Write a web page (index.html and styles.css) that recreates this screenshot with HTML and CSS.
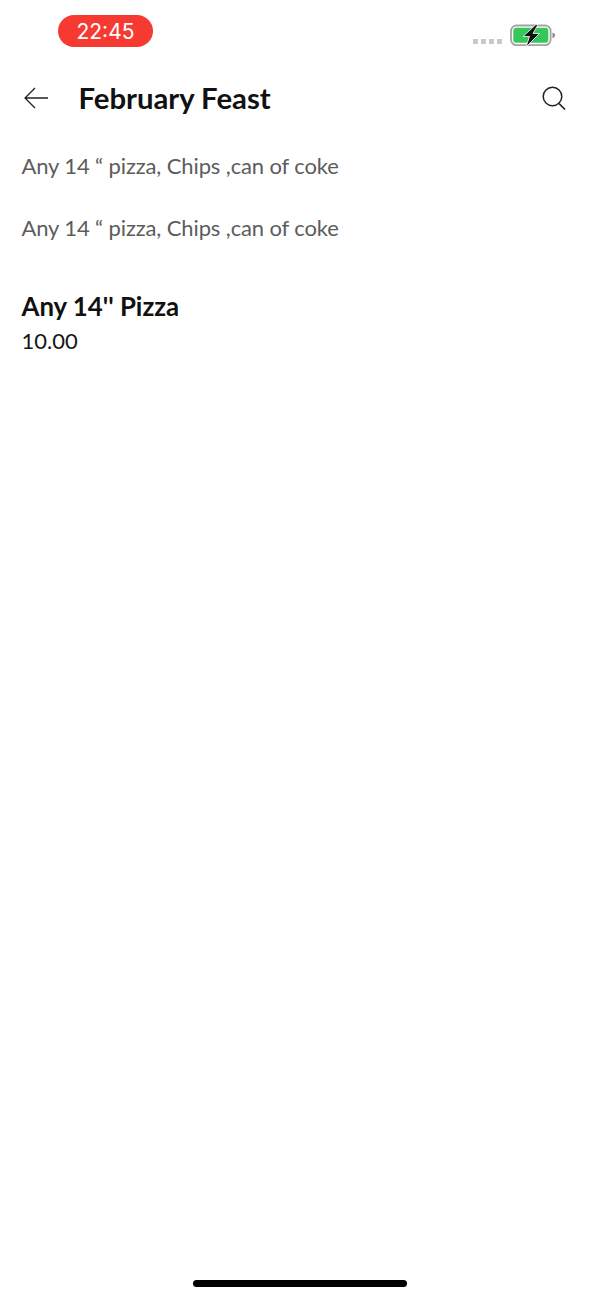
FILE: index.html
```html
<!DOCTYPE html>
<html lang="en">
<head>
<meta charset="utf-8">
<title>February Feast</title>
<link rel="stylesheet" href="styles.css">
</head>
<body>
<div class="screen">
  <div class="status">
    <span class="time">22:45</span>
    <div class="status-right">
      <div class="signal"><i></i><i></i><i></i><i></i></div>
      <svg class="battery" width="46" height="26" viewBox="0 0 46 26">
        <rect x="1" y="3.500" width="39.600" height="19.600" rx="5.500" fill="none" stroke="#a3a3a3" stroke-width="1.800"/>
        <rect x="3.300" y="5.800" width="35" height="15" rx="3" fill="#35c759"/>
        <path d="M42.500 10.500c1.800.4 2.500 1.500 2.500 2.800s-.7 2.400-2.500 2.800z" fill="#8a8a8a"/>
        <path d="M26 2.500 L13 14.500 H19.500 L16 25 L29.500 11.500 H23 L28 2.500Z" fill="#111" stroke="#fff" stroke-width=".8" stroke-linejoin="round"/>
      </svg>
    </div>
  </div>
  <header class="nav">
    <svg class="back" width="28" height="24" viewBox="0 0 28 24"><path d="M26 12H3M13 2 3 12l10 10" fill="none" stroke="#222" stroke-width="1.300"/></svg>
    <h1>February Feast</h1>
    <svg class="search" width="26" height="26" viewBox="0 0 26 26"><circle cx="11.500" cy="11.500" r="9.300" fill="none" stroke="#222" stroke-width="1.500"/><path d="m18 18.500 6 6" stroke="#222" stroke-width="1.700" fill="none"/></svg>
  </header>
  <main class="content">
    <p class="desc">Any 14 “ pizza, Chips ,can of coke</p>
    <p class="desc">Any 14 “ pizza, Chips ,can of coke</p>
    <h2>Any 14'' Pizza</h2>
    <p class="price">10.00</p>
  </main>
  <div class="home-bar"></div>
</div>
</body>
</html>
```
FILE: styles.css
```css
* { box-sizing: border-box; }
html, body { margin: 0; padding: 0; }
body { background: #fff; font-family: Lato, "Liberation Sans", sans-serif; }
.screen { width: 600px; height: 1298px; display: flex; flex-direction: column; }
.status { height: 72px; display: flex; justify-content: space-between; align-items: flex-start; padding: 15px 44px 0 58px; }
.time { width: 95px; height: 32px; border-radius: 16px; background: #f63a32; color: #fff; font: 21px/33px Inter, sans-serif; text-align: center; }
.status-right { display: flex; align-items: flex-end; gap: 8px; padding-top: 7px; }
.signal { display: flex; gap: 3px; padding-bottom: 3px; margin-left: -1px; }
.signal i { width: 5px; height: 5px; background: #c9c9c9; }
.battery { display: block; margin-bottom: -1px; }
.nav { height: 52px; display: flex; align-items: center; padding: 0 33px 0 22px; }
.back { flex: none; }
.nav h1 { margin: 0 0 0 28.500px; flex: 1; font-size: 29.300px; line-height: 52px; font-weight: 700; color: #111; }
.search { flex: none; }
.content { padding: 27.500px 21.500px 0; }
.desc { margin: 0 0 34px; font-size: 22px; letter-spacing: -.12px; line-height: 28px; color: #5c5c5c; }
h2 { margin: 48px 0 0; font-size: 25.800px; line-height: 32px; font-weight: 700; color: #111; }
.price { margin: 4.500px 0 0; font-size: 22px; line-height: 30px; color: #161616; }
.home-bar { margin: auto auto 11px; width: 214px; height: 7px; border-radius: 4px; background: #000; }
```
